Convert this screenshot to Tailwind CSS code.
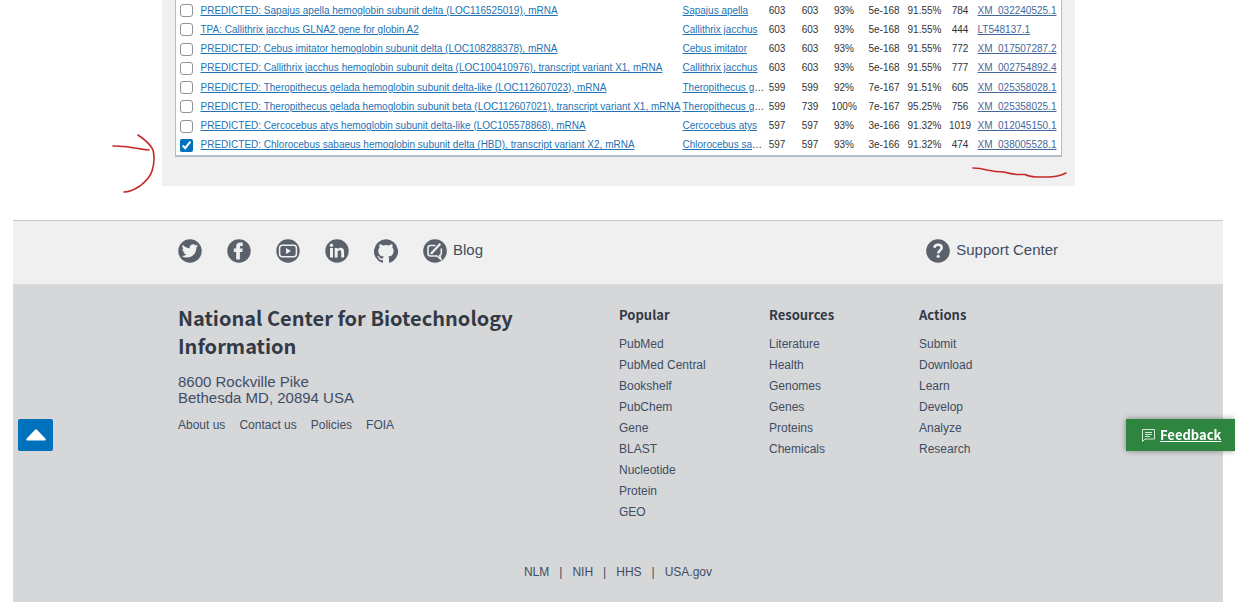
<!DOCTYPE html>
<html lang="en">
<head>
<meta charset="utf-8">
<title>BLAST results</title>
<script src="https://cdn.jsdelivr.net/npm/@tailwindcss/browser@4"></script>
</head>
<body class="relative min-h-screen overflow-x-hidden bg-white flex flex-col pl-[13px] pr-3 font-['Liberation_Sans',Arial,sans-serif]">

<main class="w-full max-w-[913px] mx-auto bg-[#f0f0f0] px-[13px] pb-[29px]">
  <div class="bg-white border-x border-b-2 border-[#aebfcc] pt-px">
    <table class="w-full h-[154px] table-fixed border-collapse text-[10px] leading-3 text-center text-[#333] whitespace-nowrap [&_a]:text-[#2272b4] [&_a]:underline [&_td]:p-0">
      <colgroup><col class="w-[25px]"><col><col class="w-[78px]"><col class="w-[33px]"><col class="w-[33px]"><col class="w-[35px]"><col class="w-[45px]"><col class="w-[36px]"><col class="w-[35px]"><col class="w-[83px]"></colgroup>
      <tbody id="hits"></tbody>
    </table>
  </div>
</main>

<footer class="mt-[34px] grow flex flex-col border-t border-[#c6c7c9] text-[#3e4d63]">
  <div class="bg-[#f0f0f0] border-b border-[#dcdcdd]">
    <div class="w-full max-w-[880px] mx-auto h-[63px] pb-1 flex items-center justify-between text-[15px]">
      <nav aria-label="Social" class="flex items-center gap-[25px] text-[#5b616b]">
        <a href="#" aria-label="Twitter"><svg class="size-6" viewBox="0 0 24 24"><circle cx="12" cy="12" r="11.7" fill="currentColor"/><path transform="translate(3.700 3.700) scale(.68)" fill="#f0f0f0" d="M23.95 4.57a10 10 0 01-2.82.78 4.96 4.96 0 002.16-2.73c-.95.56-2 .96-3.13 1.19a4.92 4.92 0 00-8.38 4.48C7.69 8.09 4.07 6.13 1.64 3.16a4.82 4.82 0 00-.67 2.48c0 1.71.87 3.21 2.19 4.1a4.9 4.9 0 01-2.23-.62v.06a4.92 4.92 0 003.95 4.83 5 5 0 01-2.21.08 4.94 4.94 0 004.6 3.42A9.87 9.87 0 010 19.54a14 14 0 007.55 2.21c9.05 0 14-7.5 14-13.98 0-.21 0-.42-.02-.63a9.94 9.94 0 002.46-2.55z"/></svg></a>
        <a href="#" aria-label="Facebook"><svg class="size-6" viewBox="0 0 24 24"><circle cx="12" cy="12" r="11.7" fill="currentColor"/><path fill="#f0f0f0" d="M9.2 20.500v-7.600H6.800V9.500h2.400V7.500c0-2.500 1.500-3.900 4-3.900h2.500v3.300h-1.500c-1 0-1.300.4-1.300 1.300v1.300h2.800l-.4 3.400h-2.400v7.600z"/></svg></a>
        <a href="#" aria-label="YouTube"><svg class="size-6" viewBox="0 0 24 24"><circle cx="12" cy="12" r="11.7" fill="currentColor"/><rect x="3.600" y="6.300" width="16.800" height="11.400" rx="2.800" fill="none" stroke="#f0f0f0" stroke-width="1.500"/><path fill="#f0f0f0" d="M10 9l5 3-5 3z"/></svg></a>
        <a href="#" aria-label="LinkedIn"><svg class="size-6" viewBox="0 0 24 24"><circle cx="12" cy="12" r="11.7" fill="currentColor"/><g fill="#f0f0f0"><circle cx="6.500" cy="6.200" r="1.700"/><path d="M5 9h3v9.400H5zM9.700 9h2.900v1.300c.6-.9 1.600-1.500 3-1.500 2.700 0 3.500 1.600 3.500 4.200v5.400h-2.900v-4.900c0-1.300-.3-2.200-1.700-2.200-1.300 0-1.900 1-1.900 2.200v4.900H9.700z"/></g></svg></a>
        <a href="#" aria-label="GitHub"><svg class="size-6" viewBox="0 0 24 24"><path fill="currentColor" d="M12 .3a12 12 0 00-3.800 23.400c.6.1.8-.3.8-.6v-2c-3.300.7-4-1.600-4-1.600-.6-1.400-1.400-1.800-1.400-1.800-1-.7.1-.7.1-.7 1.200 0 1.900 1.200 1.900 1.200 1 1.800 2.800 1.300 3.500 1 0-.8.4-1.300.7-1.600-2.700-.3-5.500-1.300-5.500-6 0-1.200.5-2.300 1.300-3.100-.2-.4-.6-1.600 0-3.200 0 0 1-.3 3.400 1.200a11.500 11.500 0 016 0c2.300-1.500 3.300-1.200 3.300-1.200.6 1.600.2 2.800 0 3.200.9.8 1.300 1.900 1.300 3.200 0 4.600-2.800 5.600-5.500 5.900.5.400.9 1 .9 2.200v3.300c0 .3.100.7.8.6A12 12 0 0012 .3"/></svg></a>
        <a href="#" class="flex items-center gap-[6px]"><svg class="size-6" viewBox="0 0 24 24" aria-hidden="true"><circle cx="12" cy="12" r="11.800" fill="currentColor"/><path fill="none" stroke="#f0f0f0" stroke-width="1.600" stroke-linejoin="round" d="M12.500 6.500H7.500C5.800 6.500 5 7.300 5 9v5.500c0 1.700.8 2.500 2.500 2.500H14l4 3.500-1.300-4c1.100-.3 1.600-1 1.600-2.500V9.500"/><path stroke="#f0f0f0" stroke-width="2.200" d="M8.500 14.200L17.300 4.800"/><path fill="#f0f0f0" d="M7.300 15.500l.8-3 2 2z"/></svg><span class="text-[#3e4d63]">Blog</span></a>
      </nav>
      <a href="#" class="flex items-center gap-[6px]"><svg class="size-6 text-[#5b616b]" viewBox="0 0 24 24" aria-hidden="true"><circle cx="12" cy="12" r="11.800" fill="currentColor"/><path fill="none" stroke="#f0f0f0" stroke-width="2.600" d="M8.300 8.700c.4-2 1.700-2.900 3.700-2.900 2.200 0 3.700 1.100 3.700 3 0 2.500-3.500 2.600-3.500 5.700"/><circle cx="12.200" cy="17.300" r="1.600" fill="#f0f0f0"/></svg>Support Center</a>
    </div>
  </div>

  <div class="grow bg-[#d6d7d9] pt-[19px] pb-5">
    <div class="w-full max-w-[880px] mx-auto flex">
      <section class="w-[441px] shrink-0 pr-20">
        <h2 class="font-['Noto_Sans_CJK_SC',sans-serif] font-bold text-[20px] leading-[28px] text-[#323a45]">National Center for Biotechnology Information</h2>
        <address class="mt-[14px] not-italic text-[15px] leading-4">8600 Rockville Pike<br>Bethesda MD, 20894 USA</address>
        <nav aria-label="About" class="mt-[11px] flex gap-[14px] text-[12px] leading-4"><a href="#">About us</a><a href="#">Contact us</a><a href="#">Policies</a><a href="#">FOIA</a></nav>
      </section>
      <nav aria-label="Site" class="grow grid grid-cols-[150px_150px_1fr] text-[12px] leading-[21px] [&_h3]:font-['Noto_Sans_CJK_SC',sans-serif] [&_h3]:font-bold [&_h3]:text-[13px] [&_h3]:text-[#323a45] [&_ul]:mt-[9px]">
        <div><h3>Popular</h3><ul><li><a href="#">PubMed</a></li><li><a href="#">PubMed Central</a></li><li><a href="#">Bookshelf</a></li><li><a href="#">PubChem</a></li><li><a href="#">Gene</a></li><li><a href="#">BLAST</a></li><li><a href="#">Nucleotide</a></li><li><a href="#">Protein</a></li><li><a href="#">GEO</a></li></ul></div>
        <div><h3>Resources</h3><ul><li><a href="#">Literature</a></li><li><a href="#">Health</a></li><li><a href="#">Genomes</a></li><li><a href="#">Genes</a></li><li><a href="#">Proteins</a></li><li><a href="#">Chemicals</a></li></ul></div>
        <div><h3>Actions</h3><ul><li><a href="#">Submit</a></li><li><a href="#">Download</a></li><li><a href="#">Learn</a></li><li><a href="#">Develop</a></li><li><a href="#">Analyze</a></li><li><a href="#">Research</a></li></ul></div>
      </nav>
    </div>
    <nav aria-label="Agencies" class="mt-[41px] flex justify-center gap-[10px] text-[12px] leading-4"><a href="#">NLM</a><span>|</span><a href="#">NIH</a><span>|</span><a href="#">HHS</a><span>|</span><a href="#">USA.gov</a></nav>
  </div>
</footer>

<button aria-label="Back to top" class="fixed left-[18px] top-[419px] w-[35px] h-8 rounded-xs bg-[#0071bc] flex items-center justify-center"><svg class="w-5 h-3" viewBox="0 0 20 12"><path fill="#fff" d="M9 .8q1-1 2 0l8.300 8.700q1.200 2-.8 2h-17q-2 0-.8-2z"/></svg></button>
<button class="fixed right-0 top-[419px] w-[109px] h-8 pl-4 bg-[#2e8540] text-white flex items-center gap-[5px] shadow-[0_0_6px_rgba(0,0,0,.4)] font-['Noto_Sans_CJK_SC',sans-serif] font-bold text-[13px]"><svg class="size-[13px]" viewBox="0 0 13 13" fill="none" stroke="#fff" aria-hidden="true"><path d="M.5.5h12v9.500H3L.5 12.500zM3 3.500h7M3 5.500h7M3 7.500h5" stroke-opacity=".8"/></svg><span class="underline">Feedback</span></button>

<!-- Hand-drawn pen marks over the selected row -->
<svg class="absolute left-[112px] top-[132px] w-[44px] h-[62px] pointer-events-none" viewBox="0 0 44 62" fill="none" stroke="#c62828" stroke-width="1.600" stroke-linecap="round" aria-hidden="true"><path d="M1 14C12 13.500 19 15 26 16.500Q31 17.500 37 18"/><path d="M26 3Q38 11 41 18Q43.500 28 40 39Q38 46 28 54Q19 60 12 60"/></svg>
<svg class="absolute left-[971px] top-[165px] w-[98px] h-[14px] pointer-events-none" viewBox="0 0 98 14" fill="none" stroke="#c62828" stroke-width="1.600" stroke-linecap="round" aria-hidden="true"><path d="M2 3Q9 3 16 5Q25 7 33 7Q40 9 46 9.500H54Q58 11.500 65 12H77Q87 12 95 8"/></svg>

<script>
const hits = [
  ["PREDICTED: Sapajus apella hemoglobin subunit delta (LOC116525019), mRNA","Sapajus apella","603","603","93%","5e-168","91.55%","784","XM_032240525.1"],
  ["TPA: Callithrix jacchus GLNA2 gene for globin A2","Callithrix jacchus","603","603","93%","5e-168","91.55%","444","LT548137.1"],
  ["PREDICTED: Cebus imitator hemoglobin subunit delta (LOC108288378), mRNA","Cebus imitator","603","603","93%","5e-168","91.55%","772","XM_017507287.2"],
  ["PREDICTED: Callithrix jacchus hemoglobin subunit delta (LOC100410976), transcript variant X1, mRNA","Callithrix jacchus","603","603","93%","5e-168","91.55%","777","XM_002754892.4"],
  ["PREDICTED: Theropithecus gelada hemoglobin subunit delta-like (LOC112607023), mRNA","Theropithecus g…","599","599","92%","7e-167","91.51%","605","XM_025358028.1"],
  ["PREDICTED: Theropithecus gelada hemoglobin subunit beta (LOC112607021), transcript variant X1, mRNA","Theropithecus g…","599","739","100%","7e-167","95.25%","756","XM_025358025.1"],
  ["PREDICTED: Cercocebus atys hemoglobin subunit delta-like (LOC105578868), mRNA","Cercocebus atys","597","597","93%","3e-166","91.32%","1019","XM_012045150.1"],
  ["PREDICTED: Chlorocebus sabaeus hemoglobin subunit delta (HBD), transcript variant X2, mRNA","Chlorocebus sa…","597","597","93%","3e-166","91.32%","474","XM_038005528.1"]
];
document.getElementById("hits").innerHTML = hits.map((h, i) => `<tr>
  <td class="text-left"><input type="checkbox" id="hit${i}" aria-label="Select ${h[8]}" class="block ml-1 size-[13px] accent-[#0071bc] not-checked:appearance-none rounded-[3px] border border-[#949494]" ${i === 7 ? "checked" : ""}></td>
  <td class="text-left"><a href="#">${h[0]}</a></td>
  <td class="text-left"><a href="#">${h[1].replace("…", "")}</a>${h[1].endsWith("…") ? "…" : ""}</td>
  ${h.slice(2, 8).map(v => `<td>${v}</td>`).join("")}
  <td class="text-left"><a href="#" class="!text-[#45689a]">${h[8]}</a></td></tr>`).join("");
</script>
</body>
</html>
